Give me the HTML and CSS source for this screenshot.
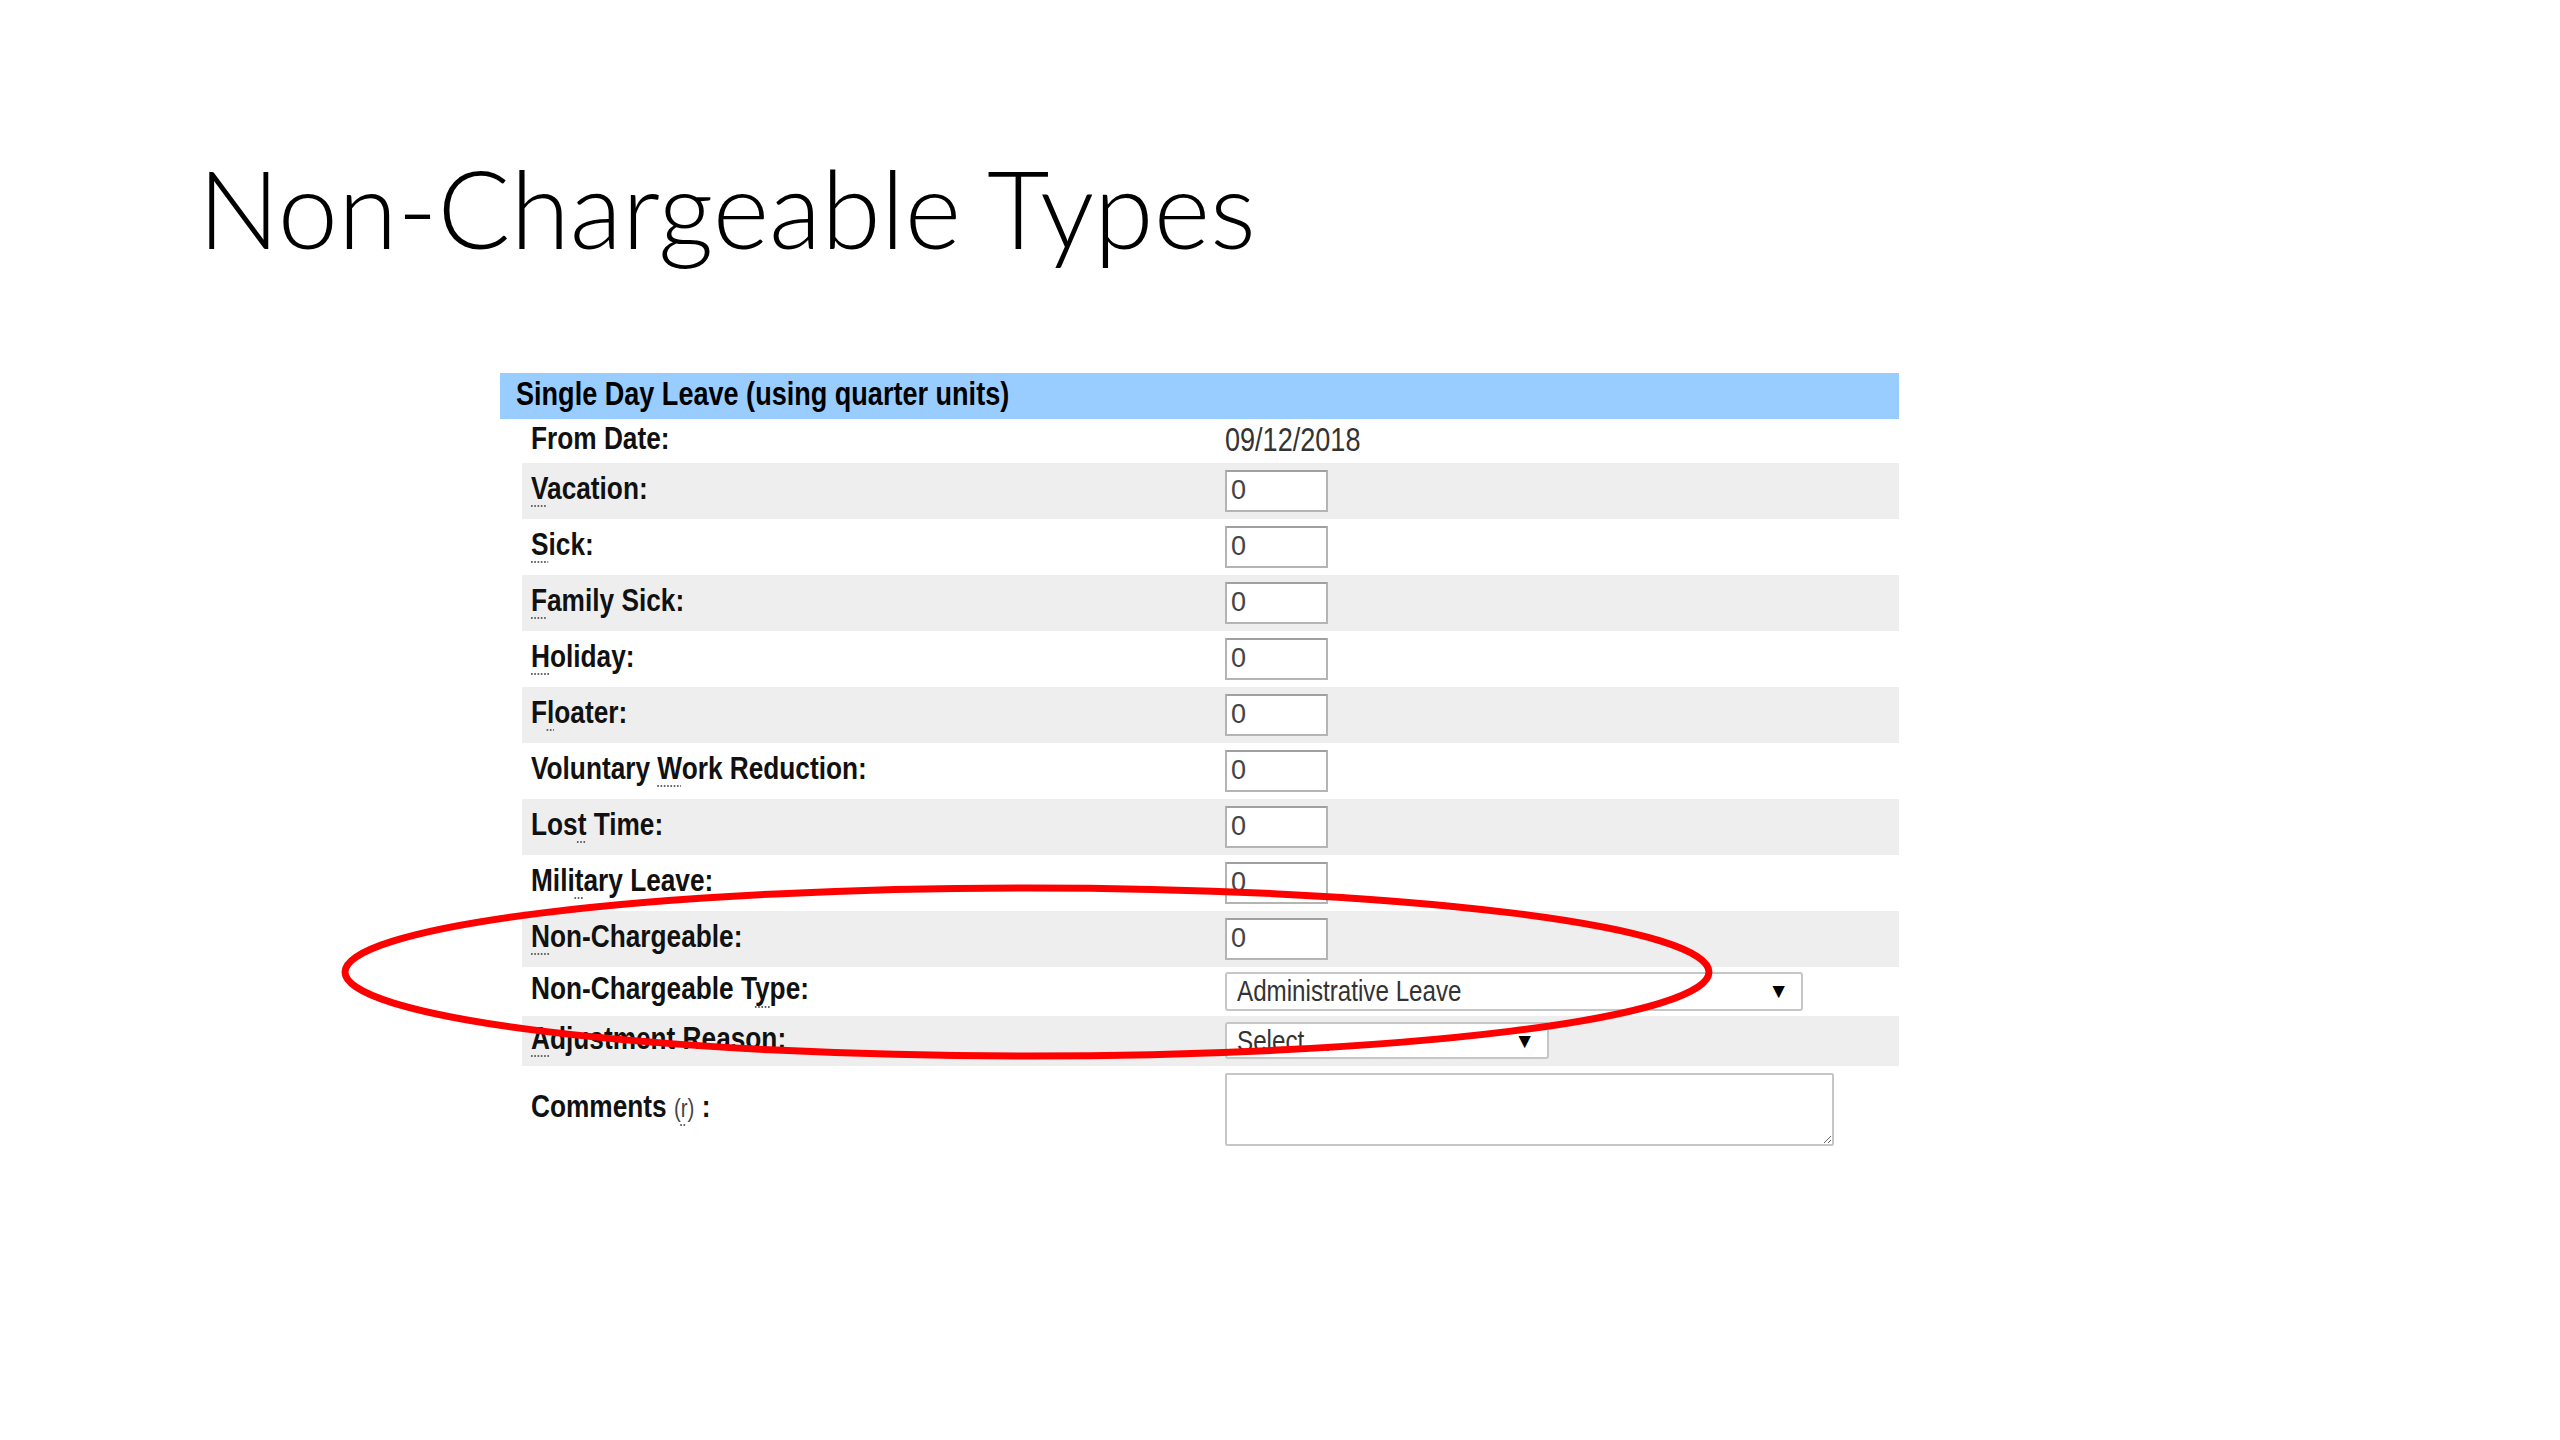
FILE: index.html
```html
<!DOCTYPE html>
<html>
<head>
    <meta charset="UTF-8">
    <title>Non-Chargeable Types</title>
    <link rel="stylesheet" href="styles.css">
</head>
<body>
    <div class="slide">
        <h1 class="title">Non-Chargeable Types</h1>

        <div class="leave-form">
            <div class="form-head"><span class="narrow">Single Day Leave (using quarter units)</span></div>

            <div class="rows">
                <div class="row row-date">
                    <div class="label"><span class="narrow">From Date:</span></div>
                    <div class="value date"><span class="narrow">09/12/2018</span></div>
                </div>
                <div class="row alt">
                    <label class="label" for="vac"><span class="narrow"><span class="ak">V</span>acation:</span></label>
                    <div class="value"><input class="qty" id="vac" value="0"></div>
                </div>
                <div class="row">
                    <label class="label" for="sick"><span class="narrow"><span class="ak">S</span>ick:</span></label>
                    <div class="value"><input class="qty" id="sick" value="0"></div>
                </div>
                <div class="row alt">
                    <label class="label" for="fam"><span class="narrow"><span class="ak">F</span>amily Sick:</span></label>
                    <div class="value"><input class="qty" id="fam" value="0"></div>
                </div>
                <div class="row">
                    <label class="label" for="hol"><span class="narrow"><span class="ak">H</span>oliday:</span></label>
                    <div class="value"><input class="qty" id="hol" value="0"></div>
                </div>
                <div class="row alt">
                    <label class="label" for="flo"><span class="narrow">F<span class="ak">l</span>oater:</span></label>
                    <div class="value"><input class="qty" id="flo" value="0"></div>
                </div>
                <div class="row">
                    <label class="label" for="vwr"><span class="narrow">Voluntary <span class="ak">W</span>ork Reduction:</span></label>
                    <div class="value"><input class="qty" id="vwr" value="0"></div>
                </div>
                <div class="row alt">
                    <label class="label" for="lost"><span class="narrow">Los<span class="ak">t</span> Time:</span></label>
                    <div class="value"><input class="qty" id="lost" value="0"></div>
                </div>
                <div class="row">
                    <label class="label" for="mil"><span class="narrow">Mili<span class="ak">t</span>ary Leave:</span></label>
                    <div class="value"><input class="qty" id="mil" value="0"></div>
                </div>
                <div class="row alt">
                    <label class="label" for="nc"><span class="narrow"><span class="ak">N</span>on-Chargeable:</span></label>
                    <div class="value"><input class="qty" id="nc" value="0"></div>
                </div>
                <div class="row row-type">
                    <div class="label"><span class="narrow">Non-Chargeable T<span class="ak">y</span>pe:</span></div>
                    <div class="value">
                        <div class="select select-wide"><span class="narrow">Administrative Leave</span><span class="arrow">&#9660;</span></div>
                    </div>
                </div>
                <div class="row alt row-adj">
                    <div class="label"><span class="narrow"><span class="ak">A</span>djustment Reason:</span></div>
                    <div class="value">
                        <div class="select select-short"><span class="narrow">Select ...</span><span class="arrow">&#9660;</span></div>
                    </div>
                </div>
                <div class="row row-comments">
                    <label class="label" for="com"><span class="narrow">Comments <span class="hint">(<span class="ak">r</span>)</span> :</span></label>
                    <div class="value"><textarea class="comments" id="com"></textarea></div>
                </div>
            </div>

            <!-- red hand-drawn mark over the form -->
            <svg class="circle-mark" width="1400" height="200" viewBox="0 0 1400 200">
                <ellipse cx="697" cy="99" rx="682" ry="84" fill="none" stroke="#ff0000" stroke-width="7"/>
            </svg>
        </div>
    </div>
</body>
</html>
```

FILE: styles.css
```css
body {
    margin: 0;
    background: #fff;
}

.slide {
    width: 2560px;
    height: 1440px;
    overflow: hidden;
}

.title {
    margin: 0;
    padding: 143px 0 0 198px;
    font-family: Lato, "Open Sans", sans-serif;
    font-weight: 300;
    font-size: 108px;
    line-height: 1.2;
    color: #000;
}

.leave-form {
    position: relative;
    margin: 0 0 0 500px;
    width: 1399px;
    margin-top: 100px;
    font-family: "Liberation Sans", Arial, sans-serif;
}

.narrow { /* the screenshot squeezed the form text sideways */
    display: inline-block;
    transform: scaleX(0.82);
    transform-origin: 0 50%;
    white-space: nowrap;
}

.form-head { /* blue title bar */
    background: #99ccff;
    height: 46px;
    padding: 0 0 3px 16px;
    box-sizing: border-box;
    display: flex;
    align-items: center;
    font-size: 33px;
    font-weight: bold;
    color: #000;
}

.rows {
    margin-left: 22px;
}

.row {
    display: flex;
    align-items: center;
    height: 56px;
}

.row.alt {
    background: #eeeeee;
}

.row-date { height: 44px; }
.row-type { height: 49px; }
.row-adj { height: 50px; }
.row-comments { height: 87px; }

.label {
    width: 694px;
    padding: 0 0 5px 9px;
    font-size: 32px;
    font-weight: bold;
    color: #111;
}

.ak { /* access key marker */
    text-decoration: underline dotted #666;
    text-decoration-thickness: 2px;
    text-underline-offset: 7px;
}

.hint {
    font-size: 25px;
    font-weight: normal;
    color: #444;
}

.value {
    flex: 1;
    display: flex;
    align-items: center;
}

.date {
    font-size: 33px;
    color: #333;
    padding-bottom: 2px;
}

.qty {
    box-sizing: border-box;
    width: 103px;
    height: 42px;
    margin: 0;
    padding: 0 4px;
    border: 2px solid #b4b4b4;
    border-top-color: #a0a0a0;
    background: #fff;
    font-family: "Liberation Sans", Arial, sans-serif;
    font-size: 27px;
    color: #444;
}

.select {
    box-sizing: border-box;
    display: flex;
    align-items: center;
    justify-content: space-between;
    height: 39px;
    padding: 0 12px 0 10px;
    border: 2px solid #c6c6c6;
    border-radius: 3px;
    background: #fff;
    font-size: 29.5px;
    color: #333;
}

.select-wide { width: 578px; }
.select-short { width: 324px; height: 37px; }

.arrow {
    font-size: 21px;
    color: #000;
}

.comments {
    box-sizing: border-box;
    display: block;
    width: 609px;
    height: 73px;
    margin: 0;
    border: 2px solid #c6c6c6;
    border-radius: 2px;
    background: #fff;
}

.circle-mark {
    position: absolute;
    left: -170px;
    top: 500px;
    pointer-events: none;
}
```
